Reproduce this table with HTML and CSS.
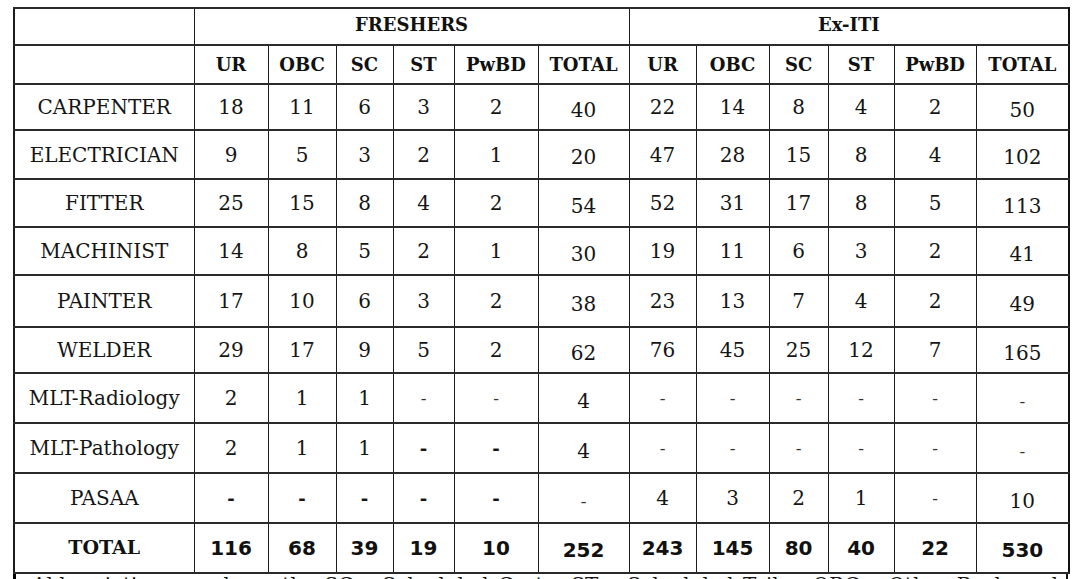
FILE: index.html
```html
<!DOCTYPE html>
<html>
<head>
<meta charset="utf-8">
<link rel="stylesheet" href="styles.css">
</head>
<body>
<div class="sheet">
<table class="seats">
<colgroup>
<col class="c-name"><col class="c-ur"><col class="c-obc"><col class="c-sc"><col class="c-st"><col class="c-pw"><col class="c-tot">
<col class="c-ur2"><col class="c-obc2"><col class="c-sc2"><col class="c-st2"><col class="c-pw2"><col class="c-tot2">
</colgroup>
<thead>
<tr class="h1"><th></th><th colspan="6">FRESHERS</th><th colspan="6">Ex-ITI</th></tr>
<tr class="h2"><th></th><th>UR</th><th>OBC</th><th>SC</th><th>ST</th><th>PwBD</th><th>TOTAL</th><th>UR</th><th>OBC</th><th>SC</th><th>ST</th><th>PwBD</th><th>TOTAL</th></tr>
</thead>
<tbody>
<tr class="r46"><td>CARPENTER</td><td>18</td><td>11</td><td>6</td><td>3</td><td>2</td><td class="low">40</td><td>22</td><td>14</td><td>8</td><td>4</td><td>2</td><td class="low">50</td></tr>
<tr class="r49"><td>ELECTRICIAN</td><td>9</td><td>5</td><td>3</td><td>2</td><td>1</td><td class="low">20</td><td>47</td><td>28</td><td>15</td><td>8</td><td>4</td><td class="low">102</td></tr>
<tr class="r48"><td>FITTER</td><td>25</td><td>15</td><td>8</td><td>4</td><td>2</td><td class="low">54</td><td>52</td><td>31</td><td>17</td><td>8</td><td>5</td><td class="low">113</td></tr>
<tr class="r48"><td>MACHINIST</td><td>14</td><td>8</td><td>5</td><td>2</td><td>1</td><td class="low">30</td><td>19</td><td>11</td><td>6</td><td>3</td><td>2</td><td class="low">41</td></tr>
<tr class="r52"><td>PAINTER</td><td>17</td><td>10</td><td>6</td><td>3</td><td>2</td><td class="low">38</td><td>23</td><td>13</td><td>7</td><td>4</td><td>2</td><td class="low">49</td></tr>
<tr class="r46"><td>WELDER</td><td>29</td><td>17</td><td>9</td><td>5</td><td>2</td><td class="low">62</td><td>76</td><td>45</td><td>25</td><td>12</td><td>7</td><td class="low">165</td></tr>
<tr class="r50"><td>MLT-Radiology</td><td>2</td><td>1</td><td>1</td><td class="dash">-</td><td class="dash">-</td><td class="low">4</td><td class="dash">-</td><td class="dash">-</td><td class="dash">-</td><td class="dash">-</td><td class="dash">-</td><td class="dash low">-</td></tr>
<tr class="r50"><td>MLT-Pathology</td><td>2</td><td>1</td><td>1</td><td class="bdash">-</td><td class="bdash">-</td><td class="low">4</td><td class="dash">-</td><td class="dash">-</td><td class="dash">-</td><td class="dash">-</td><td class="dash">-</td><td class="dash low">-</td></tr>
<tr class="r50"><td>PASAA</td><td class="bdash">-</td><td class="bdash">-</td><td class="bdash">-</td><td class="bdash">-</td><td class="bdash">-</td><td class="dash low">-</td><td>4</td><td>3</td><td>2</td><td>1</td><td class="dash">-</td><td class="low">10</td></tr>
<tr class="r50 total"><td class="tlabel">TOTAL</td><td>116</td><td>68</td><td>39</td><td>19</td><td>10</td><td class="low">252</td><td>243</td><td>145</td><td>80</td><td>40</td><td>22</td><td class="low">530</td></tr>
</tbody>
</table>
<p class="note">Abbreviations used are the SC &ndash; Scheduled Caste, ST &ndash; Scheduled Tribe, OBC &ndash; Other Backward Classes, UR &ndash; Unreserved and PwBD &ndash; Persons with Benchmark Disabilities as per the norms.</p>
</div>
</body>
</html>
```

FILE: styles.css
```css
html, body {
  margin: 0;
  padding: 0;
  background: #fff;
}
body {
  color: #151515;
  font-family: "DejaVu Serif", "Liberation Serif", serif;
  overflow: hidden;
}
.sheet {
  padding: 7px 0 0 13px;
  width: 1055px;
}
.seats {
  border-collapse: collapse;
  table-layout: fixed;
  width: 1055px;
}
.c-name { width: 180px; }
.c-ur { width: 74px; }
.c-obc { width: 68px; }
.c-sc { width: 57px; }
.c-st { width: 61px; }
.c-pw { width: 84px; }
.c-tot { width: 91px; }
.c-ur2 { width: 67px; }
.c-obc2 { width: 73px; }
.c-sc2 { width: 59px; }
.c-st2 { width: 66px; }
.c-pw2 { width: 82px; }
.c-tot2 { width: 93px; }

.seats th, .seats td {
  border-top: 2px solid #2a2a2a;
  border-bottom: 2px solid #2a2a2a;
  border-left: 1px solid #1c1c1c;
  border-right: 1px solid #1c1c1c;
  padding: 0;
  text-align: center;
  vertical-align: middle;
  white-space: nowrap;
  overflow: hidden;
}
.seats th:first-child, .seats td:first-child {
  border-left: 2px solid #1c1c1c;
}
.seats th:last-child, .seats td:last-child {
  border-right: 2px solid #111;
}
.seats th {
  font-weight: bold;
  font-size: 18px;
  color: #111;
}
.h1 { height: 37px; }
.h1 th { padding-bottom: 4px; }
.h2 { height: 39px; }
.seats td {
  font-size: 20px;
  font-weight: normal;
}
.r46 { height: 46px; }
.r48 { height: 48px; }
.r49 { height: 49px; }
.r50 { height: 50px; }
.r52 { height: 52px; }
.seats td.low { padding-top: 5px; }
.seats td.dash { color: #333; font-size: 17px; }
.seats td.bdash { font-weight: bold; font-size: 18px; }
.total td {
  font-family: "DejaVu Sans", "Liberation Sans", sans-serif;
  font-weight: bold;
  font-size: 20px;
  color: #111;
}
.total td.low { padding-top: 3px; }
.total td.tlabel {
  font-family: "DejaVu Serif", "Liberation Serif", serif;
  font-size: 19px;
  padding-bottom: 2px;
}
.note {
  margin: 0;
  border-left: 3px solid #000;
  border-right: 2px solid #111;
  padding: 0 8px 0 16px;
  font-size: 20px;
  line-height: 22px;
  text-align: justify;
}
```
